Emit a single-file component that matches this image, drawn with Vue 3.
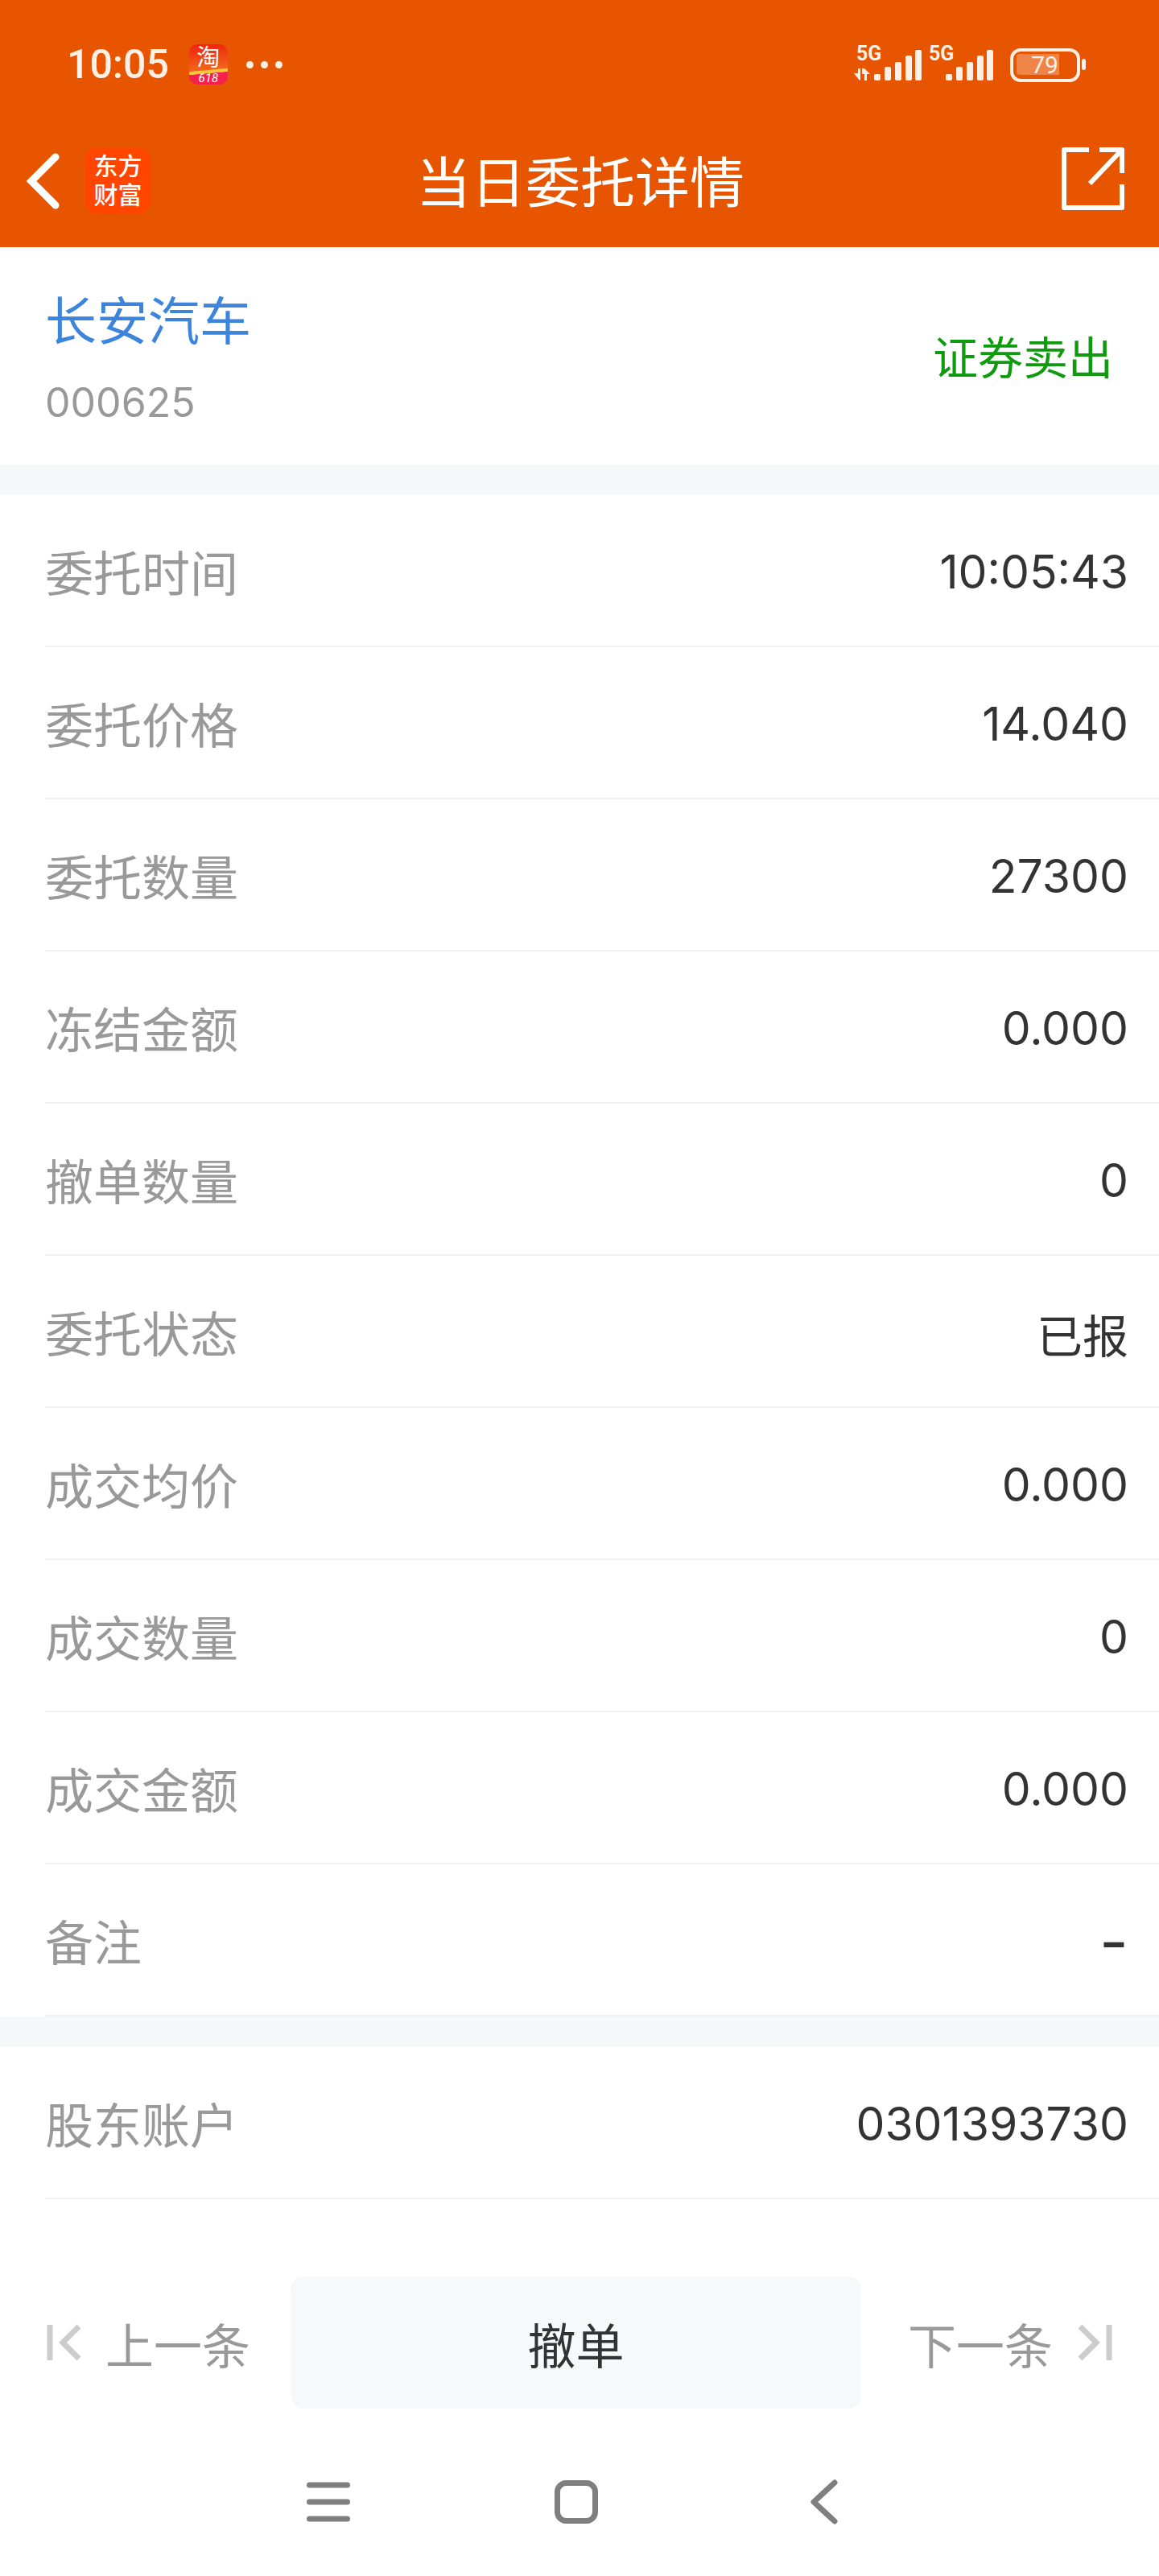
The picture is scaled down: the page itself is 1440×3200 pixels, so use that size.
<template>
  <div class="page">
    <header class="top">
      <div class="status">
        <div class="status-left">
          <span class="clock">10:05</span>
          <div class="tb-icon">
            <span class="tb-char">淘</span>
            <span class="tb-num">618</span>
          </div>
          <span class="dots"><i></i><i></i><i></i></span>
        </div>
        <svg class="signal" width="290" height="70" viewBox="0 -20 290 70">
          <text x="4" y="20" class="net">5G</text>
          <text x="94" y="20" class="net">5G</text>
          <path d="M3 36h3v-6h3v14l-1 1-7-9h2zM11 30h3l7 7h-4v8h-3v-8h-3z" fill="#ffefe5" />
          <rect v-for="b in bars" :key="b.x" :x="b.x" :y="b.y" width="8" :height="45 - b.y" rx="2" fill="#ffefe5" />
          <rect x="197" y="7" width="83" height="38" rx="11" fill="none" stroke="#ffefe5" stroke-width="4" />
          <path d="M203 16a4 4 0 0 1 4-4h49v26h-49a4 4 0 0 1-4-4z" fill="#ffffff" fill-opacity="0.28" />
          <text x="238" y="36" class="batt">79</text>
          <rect x="284" y="18" width="5" height="14" rx="2.5" fill="#ffefe5" />
        </svg>
      </div>
      <div class="nav">
        <div class="nav-left">
          <svg width="44" height="72" viewBox="0 0 44 72">
            <path d="M37 6 L7 36 L37 66" fill="none" stroke="#fff" stroke-width="9" stroke-linecap="round" stroke-linejoin="miter" />
          </svg>
          <div class="logo"><span>东方</span><span>财富</span></div>
        </div>
        <h1>当日委托详情</h1>
        <div class="nav-right">
          <svg width="80" height="80" viewBox="0 0 80 80">
            <path d="M35 4 H4 V76 H76 V47 M48 4 H76 V33 M76 4 L36 46" fill="none" stroke="#fff" stroke-width="6" stroke-linejoin="round" />
          </svg>
        </div>
      </div>
    </header>

    <section class="stock">
      <div>
        <div class="stock-name">长安汽车</div>
        <div class="stock-code">000625</div>
      </div>
      <div class="side">证券卖出</div>
    </section>

    <div class="gap"></div>
    <div class="row" v-for="row in rows" :key="row.label">
      <span class="label">{{ row.label }}</span>
      <span class="value" :class="{ dash: row.value === '-' }">{{ row.value }}</span>
    </div>
    <div class="gap"></div>
    <div class="row">
      <span class="label">股东账户</span>
      <span class="value">0301393730</span>
    </div>

    <div class="actions">
      <div class="step prev">
        <svg width="46" height="46" viewBox="0 0 46 46">
          <path d="M5 1 V45 M41 3 L21 23 L41 43" fill="none" stroke="#cccccc" stroke-width="7" />
        </svg>
        <span>上一条</span>
      </div>
      <div class="cancel">撤单</div>
      <div class="step next">
        <span>下一条</span>
        <svg width="46" height="46" viewBox="0 0 46 46">
          <path d="M41 1 V45 M5 3 L25 23 L5 43" fill="none" stroke="#cccccc" stroke-width="7" />
        </svg>
      </div>
    </div>

    <div class="sysnav">
      <svg width="54" height="50" viewBox="0 0 54 50">
        <path d="M3.5 4 H50.5 M3.5 25 H50.5 M3.5 46 H50.5" stroke="#7f7f7f" stroke-width="7" stroke-linecap="round" />
      </svg>
      <svg width="54" height="54" viewBox="0 0 54 54">
        <rect x="3.5" y="3.5" width="47" height="47" rx="11" fill="none" stroke="#7f7f7f" stroke-width="7" />
      </svg>
      <svg width="36" height="56" viewBox="0 0 36 56">
        <path d="M32 4 L6 28 L32 52" fill="none" stroke="#7f7f7f" stroke-width="7" stroke-linecap="round" stroke-linejoin="round" />
      </svg>
    </div>
  </div>
</template>

<script setup>
const rows = [
  { label: '委托时间', value: '10:05:43' },
  { label: '委托价格', value: '14.040' },
  { label: '委托数量', value: '27300' },
  { label: '冻结金额', value: '0.000' },
  { label: '撤单数量', value: '0' },
  { label: '委托状态', value: '已报' },
  { label: '成交均价', value: '0.000' },
  { label: '成交数量', value: '0' },
  { label: '成交金额', value: '0.000' },
  { label: '备注', value: '-' }
]

// 信号格
const bars = [
  { x: 26, y: 37 }, { x: 39, y: 28 }, { x: 52, y: 22 }, { x: 65, y: 14 }, { x: 77, y: 7 },
  { x: 115, y: 37 }, { x: 128, y: 28 }, { x: 141, y: 22 }, { x: 154, y: 14 }, { x: 166, y: 7 }
]
</script>

<style scoped>
.page {
  width: 1440px;
  min-height: 3200px;
  background: #fff;
  font-family: "Noto Sans CJK SC", sans-serif;
  color: #333;
  overflow: hidden;
}

.top {
  height: 307px;
  background: #e85500;
}

.status {
  height: 150px;
  padding: 55px 90px 0 83px;
  box-sizing: border-box;
  display: flex;
  justify-content: space-between;
  align-items: flex-start;
}

.status-left {
  display: flex;
  align-items: center;
  height: 50px;
}

.signal {
  margin-top: -20px;
}

.clock {
  font-family: Roboto, sans-serif;
  font-size: 50px;
  font-weight: 500;
  line-height: 50px;
  color: #ffefe5;
}

.tb-icon {
  margin-left: 25px;
  width: 48px;
  height: 50px;
  border-radius: 10px;
  background: linear-gradient(175deg, #f0200f 0, #f2661a 62%, #f8c63c 64%, #f8c63c 70%, #f5214c 71%);
  display: flex;
  flex-direction: column;
  align-items: center;
  color: #fff;
}

.tb-char {
  font-family: Roboto, "Noto Sans CJK SC", sans-serif;
  font-size: 29px;
  line-height: 34px;
  height: 34px;
}

.tb-num {
  font-family: Roboto, sans-serif;
  font-size: 15px;
  font-style: italic;
  line-height: 16px;
  height: 16px;
}

.dots {
  display: flex;
  gap: 9px;
  margin-left: 23px;
}

.dots i {
  width: 9px;
  height: 9px;
  border-radius: 50%;
  background: #ffefe5;
}

.net {
  font-family: Roboto, sans-serif;
  font-size: 25px;
  font-weight: 700;
  fill: #ffefe5;
}

.batt {
  font-family: Roboto, sans-serif;
  font-size: 30px;
  fill: #ffefe5;
  text-anchor: middle;
}

.nav {
  height: 157px;
  display: grid;
  grid-template-columns: 1fr auto 1fr;
  align-items: center;
  padding: 0 30px 8px 32px;
  box-sizing: border-box;
}

.nav-left {
  display: flex;
  align-items: center;
  gap: 29px;
}

.logo {
  width: 83px;
  height: 83px;
  background: #ff4500;
  border-radius: 18px;
  color: #fff;
  font-family: Roboto, "Noto Sans CJK SC", sans-serif;
  font-size: 30px;
  font-weight: 500;
  line-height: 36px;
  display: flex;
  flex-direction: column;
  align-items: center;
  justify-content: center;
}

.nav h1 {
  margin: 0 0 3px;
  font-size: 68px;
  font-weight: 400;
  color: #fff;
  line-height: 80px;
}

.nav-right {
  display: flex;
  justify-content: flex-end;
  margin: 0 12px 6px 0;
}

.stock {
  height: 270px;
  padding: 0 57px 0 56px;
  display: flex;
  justify-content: space-between;
  align-items: center;
  box-sizing: border-box;
}

.stock-name {
  font-size: 64px;
  line-height: 80px;
  color: #3d85dc;
}

.stock-code {
  margin-top: 36px;
  font-family: Inter, sans-serif;
  font-size: 50px;
  line-height: 60px;
  color: #999;
}

.side {
  font-size: 56px;
  color: #0f9a0f;
  margin-bottom: 4px;
}

.gap {
  height: 38px;
  background: #f6f7f9;
}

.row {
  height: 189px;
  margin-left: 56px;
  padding-right: 38px;
  border-bottom: 2px solid #f1f1f1;
  box-sizing: border-box;
  display: flex;
  justify-content: space-between;
  align-items: center;
  font-size: 60px;
}

.label {
  color: #999;
}

.value {
  color: #333;
  font-family: Inter, "Noto Sans CJK SC", sans-serif;
  font-size: 57px;
  margin-top: 4px;
}

.value.dash {
  font-size: 78px;
}

.actions {
  margin-top: 96px;
  height: 164px;
  display: grid;
  grid-template-columns: 361px 709px 1fr;
}

.step {
  display: flex;
  align-items: center;
  gap: 28px;
  font-size: 60px;
  color: #999;
}

.prev {
  padding-left: 57px;
}

.next {
  justify-content: flex-end;
  padding-right: 57px;
  gap: 29px;
}

.cancel {
  background: #f7f8fa;
  border-radius: 16px;
  display: flex;
  align-items: center;
  justify-content: center;
  font-size: 60px;
  color: #333;
}

.sysnav {
  margin-top: 88px;
  padding-left: 381px;
  display: flex;
  align-items: center;
  gap: 254px;
  height: 56px;
}

.sysnav svg:last-child {
  margin-left: 8px;
}
</style>
